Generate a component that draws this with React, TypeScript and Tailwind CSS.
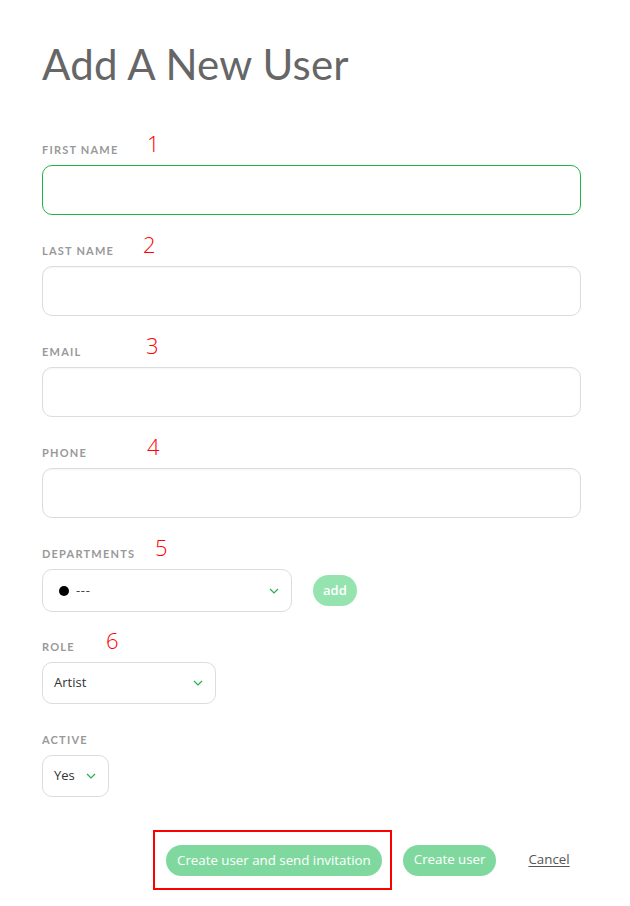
import React from "react";

const fields = [
  { label: "First Name", num: "1", numLeft: "left-[105px]", focused: true },
  { label: "Last Name", num: "2", numLeft: "left-[101px]" },
  { label: "Email", num: "3", numLeft: "left-[104px]" },
  { label: "Phone", num: "4", numLeft: "left-[105px]" },
];

function Chevron() {
  return (
    <svg width="10" height="6" viewBox="0 0 10 6" className="shrink-0">
      <polyline points="1,1 5,5 9,1" fill="none" stroke="#22b14c" strokeWidth="1.2" />
    </svg>
  );
}

function Label({ text, num, numLeft }: { text: string; num: string; numLeft: string }) {
  return (
    <div className="relative h-[25px] flex items-start">
      <span className="mt-[4px] text-[11px] leading-[11px] font-bold uppercase tracking-[0.11em] text-[#999999] font-['Lato',sans-serif]">
        {text}
      </span>
      <span className={`absolute ${numLeft} top-[-10px] text-[22px] leading-[26px] text-[#ff0000] font-['Open_Sans',sans-serif] font-light`}>
        {num}
      </span>
    </div>
  );
}

export default function App() {
  return (
    <div className="w-[630px] h-[906px] bg-white pl-[42px] pr-[49px] pt-[38px] font-['Open_Sans',sans-serif]">
      <h1 className="text-[42px] leading-[52px] text-[#666666] font-['Lato',sans-serif] tracking-[0.005em]">
        Add A New User
      </h1>

      <div className="mt-[50px] flex flex-col gap-[26px]">
        {fields.map((f) => (
          <div key={f.label}>
            <Label text={f.label} num={f.num} numLeft={f.numLeft} />
            <div
              className={
                f.focused
                  ? "h-[50px] rounded-[10px] border border-[#1fb546]"
                  : "h-[50px] rounded-[10px] border border-[#dcdcdc] shadow-[inset_0_1px_2px_rgba(0,0,0,0.04)]"
              }
            />
          </div>
        ))}

        <div>
          <Label text="Departments" num="5" numLeft="left-[113px]" />
          <div className="flex items-center gap-[21px]">
            <div className="w-[250px] h-[43px] rounded-[10px] border border-[#dcdcdc] flex items-center pl-[16px] pr-[12px]">
              <span className="w-[10px] h-[10px] rounded-full bg-black" />
              <span className="ml-[7px] text-[13px] tracking-[0.05em] text-[#444]">---</span>
              <span className="ml-auto">
                <Chevron />
              </span>
            </div>
            <button className="h-[31px] px-[10px] rounded-full bg-[#95e4b0] text-white text-[13px] font-semibold">
              add
            </button>
          </div>
        </div>

        <div className="mt-[-1px]">
          <Label text="Role" num="6" numLeft="left-[64px]" />
          <div className="w-[174px] h-[42px] rounded-[10px] border border-[#dcdcdc] flex items-center pl-[11px] pr-[12px]">
            <span className="text-[13px] text-[#333]">Artist</span>
            <span className="ml-auto">
              <Chevron />
            </span>
          </div>
        </div>

        <div>
          <Label text="Active" num="" numLeft="left-0" />
          <div className="w-[67px] h-[42px] rounded-[10px] border border-[#dcdcdc] flex items-center pl-[11px] pr-[12px]">
            <span className="text-[13px] text-[#333]">Yes</span>
            <span className="ml-auto">
              <Chevron />
            </span>
          </div>
        </div>
      </div>

      <div className="mt-[33px] flex items-center pl-[111px]">
        <div className="border-2 border-[#ff0000] pl-[11px] pr-[8px] pt-[13px] pb-[12px]">
          <button className="h-[31px] px-[11px] rounded-full bg-[#7fd99e] text-white text-[13.3px]">
            Create user and send invitation
          </button>
        </div>
        <button className="ml-[11px] h-[31px] px-[11px] rounded-full bg-[#7fd99e] text-white text-[13.3px]">
          Create user
        </button>
        <button className="ml-[32px] text-[13.3px] text-[#555] underline underline-offset-2">Cancel</button>
      </div>
    </div>
  );
}
